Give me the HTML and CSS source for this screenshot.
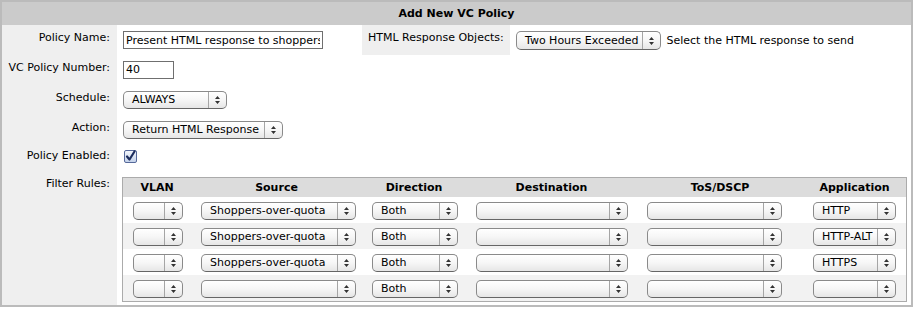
FILE: index.html
```html
<!DOCTYPE html>
<html>
<head>
  <link rel="stylesheet" href="styles.css">
</head>
<body>
  <table class="policy">
    <colgroup>
      <col class="col-label">
      <col class="col-main">
      <col class="col-label2">
      <col>
    </colgroup>
    <tr>
      <th colspan="4" class="title">Add New VC Policy</th>
    </tr>
    <tr>
      <td class="label">Policy Name:</td>
      <td class="field field-first"><input class="text-input w-name" type="text" value="Present HTML response to shoppers"></td>
      <td class="label label-left">HTML Response Objects:</td>
      <td class="field field-first">
        <span class="select w-object"><span class="select-value">Two Hours Exceeded</span><span class="select-arrow"><svg width="7" height="10" viewBox="0 0 7 10"><path d="M1 4 L3.5 1 L6 4 Z M1 6 L3.5 9 L6 6 Z" fill="#333"/></svg></span></span>
        <span class="hint">Select the HTML response to send</span>
      </td>
    </tr>
    <tr>
      <td class="label">VC Policy Number:</td>
      <td class="field" colspan="3"><input class="text-input w-number" type="text" value="40"></td>
    </tr>
    <tr>
      <td class="label">Schedule:</td>
      <td class="field" colspan="3">
        <span class="select w-schedule"><span class="select-value">ALWAYS</span><span class="select-arrow"><svg width="7" height="10" viewBox="0 0 7 10"><path d="M1 4 L3.5 1 L6 4 Z M1 6 L3.5 9 L6 6 Z" fill="#333"/></svg></span></span>
      </td>
    </tr>
    <tr>
      <td class="label">Action:</td>
      <td class="field" colspan="3">
        <span class="select w-action"><span class="select-value">Return HTML Response</span><span class="select-arrow"><svg width="7" height="10" viewBox="0 0 7 10"><path d="M1 4 L3.5 1 L6 4 Z M1 6 L3.5 9 L6 6 Z" fill="#333"/></svg></span></span>
      </td>
    </tr>
    <tr>
      <td class="label label-check">Policy Enabled:</td>
      <td class="field field-check" colspan="3">
        <span class="checkbox"><svg width="13" height="13" viewBox="0 0 13 13"><path d="M3 6.5 L5.5 9.5 L10.5 1.5" fill="none" stroke="#1c2d5e" stroke-width="2.2" stroke-linecap="round" stroke-linejoin="round"/></svg></span>
      </td>
    </tr>
    <tr>
      <td class="label">Filter Rules:</td>
      <td class="field field-rules" colspan="3">
        <table class="rules">
          <colgroup>
            <col class="r-vlan">
            <col class="r-source">
            <col class="r-direction">
            <col class="r-destination">
            <col class="r-tos">
            <col>
          </colgroup>
          <thead>
            <tr>
              <th>VLAN</th>
              <th>Source</th>
              <th>Direction</th>
              <th>Destination</th>
              <th>ToS/DSCP</th>
              <th>Application</th>
            </tr>
          </thead>
          <tbody>
            <tr>
              <td><span class="select w-vlan"><span class="select-value"></span><span class="select-arrow"><svg width="7" height="10" viewBox="0 0 7 10"><path d="M1 4 L3.5 1 L6 4 Z M1 6 L3.5 9 L6 6 Z" fill="#333"/></svg></span></span></td>
              <td><span class="select w-source"><span class="select-value">Shoppers-over-quota</span><span class="select-arrow"><svg width="7" height="10" viewBox="0 0 7 10"><path d="M1 4 L3.5 1 L6 4 Z M1 6 L3.5 9 L6 6 Z" fill="#333"/></svg></span></span></td>
              <td><span class="select w-direction"><span class="select-value">Both</span><span class="select-arrow"><svg width="7" height="10" viewBox="0 0 7 10"><path d="M1 4 L3.5 1 L6 4 Z M1 6 L3.5 9 L6 6 Z" fill="#333"/></svg></span></span></td>
              <td><span class="select w-destination"><span class="select-value"></span><span class="select-arrow"><svg width="7" height="10" viewBox="0 0 7 10"><path d="M1 4 L3.5 1 L6 4 Z M1 6 L3.5 9 L6 6 Z" fill="#333"/></svg></span></span></td>
              <td><span class="select w-tos"><span class="select-value"></span><span class="select-arrow"><svg width="7" height="10" viewBox="0 0 7 10"><path d="M1 4 L3.5 1 L6 4 Z M1 6 L3.5 9 L6 6 Z" fill="#333"/></svg></span></span></td>
              <td><span class="select w-app"><span class="select-value">HTTP</span><span class="select-arrow"><svg width="7" height="10" viewBox="0 0 7 10"><path d="M1 4 L3.5 1 L6 4 Z M1 6 L3.5 9 L6 6 Z" fill="#333"/></svg></span></span></td>
            </tr>
            <tr>
              <td><span class="select w-vlan"><span class="select-value"></span><span class="select-arrow"><svg width="7" height="10" viewBox="0 0 7 10"><path d="M1 4 L3.5 1 L6 4 Z M1 6 L3.5 9 L6 6 Z" fill="#333"/></svg></span></span></td>
              <td><span class="select w-source"><span class="select-value">Shoppers-over-quota</span><span class="select-arrow"><svg width="7" height="10" viewBox="0 0 7 10"><path d="M1 4 L3.5 1 L6 4 Z M1 6 L3.5 9 L6 6 Z" fill="#333"/></svg></span></span></td>
              <td><span class="select w-direction"><span class="select-value">Both</span><span class="select-arrow"><svg width="7" height="10" viewBox="0 0 7 10"><path d="M1 4 L3.5 1 L6 4 Z M1 6 L3.5 9 L6 6 Z" fill="#333"/></svg></span></span></td>
              <td><span class="select w-destination"><span class="select-value"></span><span class="select-arrow"><svg width="7" height="10" viewBox="0 0 7 10"><path d="M1 4 L3.5 1 L6 4 Z M1 6 L3.5 9 L6 6 Z" fill="#333"/></svg></span></span></td>
              <td><span class="select w-tos"><span class="select-value"></span><span class="select-arrow"><svg width="7" height="10" viewBox="0 0 7 10"><path d="M1 4 L3.5 1 L6 4 Z M1 6 L3.5 9 L6 6 Z" fill="#333"/></svg></span></span></td>
              <td><span class="select w-app"><span class="select-value">HTTP-ALT</span><span class="select-arrow"><svg width="7" height="10" viewBox="0 0 7 10"><path d="M1 4 L3.5 1 L6 4 Z M1 6 L3.5 9 L6 6 Z" fill="#333"/></svg></span></span></td>
            </tr>
            <tr>
              <td><span class="select w-vlan"><span class="select-value"></span><span class="select-arrow"><svg width="7" height="10" viewBox="0 0 7 10"><path d="M1 4 L3.5 1 L6 4 Z M1 6 L3.5 9 L6 6 Z" fill="#333"/></svg></span></span></td>
              <td><span class="select w-source"><span class="select-value">Shoppers-over-quota</span><span class="select-arrow"><svg width="7" height="10" viewBox="0 0 7 10"><path d="M1 4 L3.5 1 L6 4 Z M1 6 L3.5 9 L6 6 Z" fill="#333"/></svg></span></span></td>
              <td><span class="select w-direction"><span class="select-value">Both</span><span class="select-arrow"><svg width="7" height="10" viewBox="0 0 7 10"><path d="M1 4 L3.5 1 L6 4 Z M1 6 L3.5 9 L6 6 Z" fill="#333"/></svg></span></span></td>
              <td><span class="select w-destination"><span class="select-value"></span><span class="select-arrow"><svg width="7" height="10" viewBox="0 0 7 10"><path d="M1 4 L3.5 1 L6 4 Z M1 6 L3.5 9 L6 6 Z" fill="#333"/></svg></span></span></td>
              <td><span class="select w-tos"><span class="select-value"></span><span class="select-arrow"><svg width="7" height="10" viewBox="0 0 7 10"><path d="M1 4 L3.5 1 L6 4 Z M1 6 L3.5 9 L6 6 Z" fill="#333"/></svg></span></span></td>
              <td><span class="select w-app"><span class="select-value">HTTPS</span><span class="select-arrow"><svg width="7" height="10" viewBox="0 0 7 10"><path d="M1 4 L3.5 1 L6 4 Z M1 6 L3.5 9 L6 6 Z" fill="#333"/></svg></span></span></td>
            </tr>
            <tr>
              <td><span class="select w-vlan"><span class="select-value"></span><span class="select-arrow"><svg width="7" height="10" viewBox="0 0 7 10"><path d="M1 4 L3.5 1 L6 4 Z M1 6 L3.5 9 L6 6 Z" fill="#333"/></svg></span></span></td>
              <td><span class="select w-source"><span class="select-value"></span><span class="select-arrow"><svg width="7" height="10" viewBox="0 0 7 10"><path d="M1 4 L3.5 1 L6 4 Z M1 6 L3.5 9 L6 6 Z" fill="#333"/></svg></span></span></td>
              <td><span class="select w-direction"><span class="select-value">Both</span><span class="select-arrow"><svg width="7" height="10" viewBox="0 0 7 10"><path d="M1 4 L3.5 1 L6 4 Z M1 6 L3.5 9 L6 6 Z" fill="#333"/></svg></span></span></td>
              <td><span class="select w-destination"><span class="select-value"></span><span class="select-arrow"><svg width="7" height="10" viewBox="0 0 7 10"><path d="M1 4 L3.5 1 L6 4 Z M1 6 L3.5 9 L6 6 Z" fill="#333"/></svg></span></span></td>
              <td><span class="select w-tos"><span class="select-value"></span><span class="select-arrow"><svg width="7" height="10" viewBox="0 0 7 10"><path d="M1 4 L3.5 1 L6 4 Z M1 6 L3.5 9 L6 6 Z" fill="#333"/></svg></span></span></td>
              <td><span class="select w-app"><span class="select-value"></span><span class="select-arrow"><svg width="7" height="10" viewBox="0 0 7 10"><path d="M1 4 L3.5 1 L6 4 Z M1 6 L3.5 9 L6 6 Z" fill="#333"/></svg></span></span></td>
            </tr>
          </tbody>
        </table>
      </td>
    </tr>
  </table>
</body>
</html>
```

FILE: styles.css
```css
body {
  margin: 0;
  font-family: "DejaVu Sans", Verdana, sans-serif;
  font-size: 11px;
  color: #000;
  background: #fff;
}

.policy {
  width: 913px;
  border: 2px solid #bbb;
  border-spacing: 0;
  table-layout: fixed;
}

.col-label {
  width: 115px;
}

.col-main {
  width: 245px;
}

.col-label2 {
  width: 148px;
}

.policy td {
  padding: 0;
}

.title {
  height: 23px;
  padding: 0;
  background: #cbcbcb;
  font-weight: bold;
  text-align: center;
  vertical-align: middle;
}

.policy .label {
  padding: 5px 7px 0 2px;
  background: #efefef;
  text-align: right;
  vertical-align: top;
  line-height: 16px;
  white-space: nowrap;
}

.policy .label-left {
  padding-left: 6px;
  text-align: left;
}

.policy .label-check {
  padding-top: 3px;
}

.policy .field {
  padding: 6px 6px 6px 6px;
  vertical-align: top;
  line-height: 18px;
  white-space: nowrap;
}

.policy .field-first {
  padding-bottom: 5px;
  line-height: 19px;
}

.policy .field-check {
  padding: 4px 6px 5px 7px;
  line-height: 17px;
}

.policy .field-rules {
  padding: 6px 4px 3px 5px;
}

/* text inputs */
.text-input {
  box-sizing: border-box;
  height: 18px;
  margin: 0;
  padding: 0 2px;
  border: 1px solid #6f6f6f;
  font: inherit;
  vertical-align: top;
  background: #fff;
}

.w-name {
  width: 200px;
}

.w-number {
  width: 51px;
}

/* aqua-style select */
.select {
  box-sizing: border-box;
  display: inline-flex;
  height: 18px;
  border: 1px solid #8a8a8a;
  border-bottom-color: #666;
  border-radius: 5px;
  background: linear-gradient(#fff, #f6f6f6 50%, #e6e6e6);
  box-shadow: inset 0 1px 0 #fff;
  vertical-align: top;
  line-height: 16px;
  text-align: left;
  overflow: hidden;
}

.select-value {
  flex: 1;
  padding-left: 8px;
  white-space: nowrap;
  overflow: hidden;
}

.select-arrow {
  width: 17px;
  border-left: 1px solid #a5a5a5;
  display: flex;
  align-items: center;
  justify-content: center;
}

.w-object {
  width: 145px;
  height: 19px;
  line-height: 17px;
}

.w-schedule {
  width: 104px;
}

.w-action {
  width: 160px;
}

.hint {
  margin-left: 2px;
  vertical-align: top;
  line-height: 19px;
}

/* checkbox */
.checkbox {
  box-sizing: border-box;
  display: inline-block;
  width: 13px;
  height: 13px;
  border: 1px solid #56699a;
  border-radius: 2px;
  background: linear-gradient(#f3f6fc, #c4d2ea);
  vertical-align: top;
  margin-top: 1px;
  line-height: 0;
}

.checkbox svg {
  margin: -1px 0 0 -1px;
}

/* filter rules */
.rules {
  width: 785px;
  border: 1px solid #ababab;
  border-spacing: 0;
  table-layout: fixed;
}

.r-vlan {
  width: 68px;
}

.r-source {
  width: 171px;
}

.r-direction {
  width: 104px;
}

.r-destination {
  width: 171px;
}

.r-tos {
  width: 166px;
}

.rules th {
  height: 19px;
  padding: 0;
  background: #dcdcdc;
  font-weight: bold;
  text-align: center;
  vertical-align: middle;
}

.rules td {
  height: 26px;
  box-sizing: border-box;
  padding: 5px 0 3px 10px;
  vertical-align: top;
  line-height: 18px;
}

.rules tbody tr:nth-child(even) td {
  background: #f2f2f2;
}

.w-vlan {
  width: 50px;
}

.w-source {
  width: 155px;
}

.w-direction {
  width: 86px;
}

.w-destination {
  width: 152px;
}

.w-tos {
  width: 135px;
}

.w-app {
  width: 83px;
}
```
